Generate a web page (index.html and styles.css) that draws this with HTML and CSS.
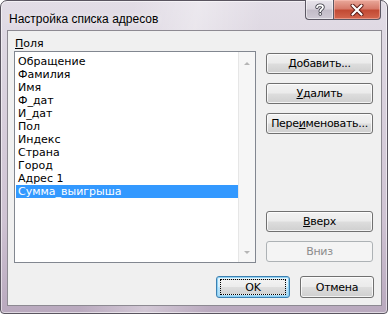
FILE: index.html
```html
<!DOCTYPE html>
<html lang="ru">
<head>
<meta charset="utf-8">
<title>Настройка списка адресов</title>
<link rel="stylesheet" href="styles.css">
</head>
<body>
<div class="window">
  <div class="titlebar">
    <div class="title">Настройка списка адресов</div>
    <div class="caption-buttons">
      <div class="cap-btn help">
        <svg width="12" height="13" viewBox="0 0 12 13"><path d="M3 4.2 C3 1.6 9 1.6 9 4.3 C9 6.2 6.2 6.2 6.2 8.2" fill="none" stroke="#3b3b45" stroke-width="3.4" stroke-linecap="round"/><path d="M3 4.2 C3 1.6 9 1.6 9 4.3 C9 6.2 6.2 6.2 6.2 8.2" fill="none" stroke="#fff" stroke-width="1.8" stroke-linecap="round"/><circle cx="6.2" cy="11" r="1.7" fill="#3b3b45"/><circle cx="6.2" cy="11" r="0.9" fill="#fff"/></svg>
      </div>
      <div class="cap-btn close">
        <svg width="14" height="12" viewBox="0 0 14 12"><path d="M2.5 1.5 L11.5 10.5 M11.5 1.5 L2.5 10.5" stroke="#5a1a14" stroke-width="4" stroke-linecap="round"/><path d="M2.5 1.5 L11.5 10.5 M11.5 1.5 L2.5 10.5" stroke="#fff" stroke-width="2.2" stroke-linecap="round"/></svg>
      </div>
    </div>
  </div>
  <div class="client">
    <div class="main">
      <div class="left">
        <div class="label"><u>П</u>оля</div>
        <div class="listbox">
          <ul class="items">
            <li>Обращение</li>
            <li>Фамилия</li>
            <li>Имя</li>
            <li>Ф_дат</li>
            <li>И_дат</li>
            <li>Пол</li>
            <li>Индекс</li>
            <li>Страна</li>
            <li>Город</li>
            <li>Адрес 1</li>
            <li class="selected">Сумма_выигрыша</li>
          </ul>
          <div class="scrollbar">
            <span class="arrow up"></span>
            <span class="arrow down"></span>
          </div>
        </div>
      </div>
      <div class="right">
        <div class="btn-group">
          <button class="btn"><u>Д</u>обавить...</button>
          <button class="btn"><u>У</u>далить</button>
          <button class="btn">Пере<u>и</u>меновать...</button>
        </div>
        <div class="btn-group bottom">
          <button class="btn"><u>В</u>верх</button>
          <button class="btn" disabled>Вниз</button>
        </div>
      </div>
    </div>
    <div class="footer">
      <button class="btn default"><span class="focus">OK</span></button>
      <button class="btn">Отмена</button>
    </div>
  </div>
</div>
</body>
</html>
```

FILE: styles.css
```css
* { box-sizing: border-box; }
html, body { margin: 0; padding: 0; }
body {
  width: 388px;
  height: 314px;
  background: #ffffff;
  font-family: "DejaVu Sans", Tahoma, sans-serif;
  font-size: 11px;
  color: #000;
}
.window {
  width: 388px;
  height: 314px;
  border: 1px solid #5a5560;
  border-radius: 7px 7px 4px 4px;
  background:
    linear-gradient(100deg, rgba(255,255,255,0) 30%, rgba(255,255,255,0.35) 45%, rgba(255,255,255,0) 60%),
    linear-gradient(180deg, #e2dde6 0%, #d9d1dd 30%, #cfc3d3 70%, #b9a9be 100%);
  display: flex;
  flex-direction: column;
  box-shadow: inset 0 0 0 1px rgba(255,255,255,0.55);
}
.titlebar {
  height: 29px;
  display: flex;
  align-items: flex-start;
  padding-left: 8px;
  flex: none;
}
.title {
  font-family: "Liberation Sans", Arial, sans-serif;
  font-size: 12px;
  line-height: 16px;
  margin-top: 10px;
  color: #000;
  text-shadow: 0 0 6px rgba(255,255,255,0.9);
}
.caption-buttons {
  margin-left: auto;
  margin-right: 6px;
  margin-top: -1px;
  display: flex;
  height: 20px;
}
.cap-btn {
  height: 20px;
  display: flex;
  align-items: center;
  justify-content: center;
  border: 1px solid #5c5864;
  border-top: none;
}
.cap-btn.help {
  width: 28px;
  border-radius: 0 0 0 4px;
  border-right: none;
  background: linear-gradient(180deg, #e7e3ea 0%, #d9d4dd 45%, #c3bcc8 55%, #cfc9d4 100%);
  box-shadow: inset 0 0 0 1px rgba(255,255,255,0.5);
}
.cap-btn.close {
  width: 48px;
  border-radius: 0 0 4px 0;
  background: linear-gradient(180deg, #e9a99b 0%, #d77b6b 45%, #c24a34 55%, #d3664e 100%);
  box-shadow: inset 0 0 0 1px rgba(255,200,190,0.5);
}
.client {
  flex: 1;
  margin: 0 5px 7px 6px;
  background: #f0f0f0;
  border: 1px solid #8d8a92;
  padding: 6px 7px 7px 6px;
  display: flex;
  flex-direction: column;
}
.main {
  display: flex;
  gap: 10px;
  height: 226px;
}
.left {
  width: 242px;
  display: flex;
  flex-direction: column;
}
.label {
  height: 14px;
  line-height: 13px;
  padding-left: 1px;
}
.label u, .btn u { text-decoration: underline; text-underline-offset: 1px; }
.listbox {
  flex: 1;
  border: 1px solid #828790;
  background: #fff;
  display: flex;
}
.items {
  list-style: none;
  margin: 0;
  padding: 3px 0 0 1px;
  flex: 1;
}
.items li {
  height: 13px;
  line-height: 13px;
  padding-left: 2px;
  white-space: nowrap;
}
.items li.selected {
  background: #3399ff;
  color: #fff;
}
.scrollbar {
  width: 17px;
  background: #f6f6f6;
  border-left: 1px solid #e6e6e6;
  display: flex;
  flex-direction: column;
  justify-content: space-between;
  align-items: center;
  padding: 10px 0 8px;
}
.arrow {
  width: 0;
  height: 0;
  border-left: 3px solid transparent;
  border-right: 3px solid transparent;
}
.arrow.up { border-bottom: 3px solid #b5b5b5; }
.arrow.down { border-top: 3px solid #b5b5b5; }
.right {
  width: 107px;
  display: flex;
  flex-direction: column;
  padding-top: 16px;
  padding-bottom: 1px;
}
.btn-group {
  display: flex;
  flex-direction: column;
  gap: 9px;
}
.btn-group.bottom { margin-top: auto; }
.btn {
  font-family: "DejaVu Sans", Tahoma, sans-serif;
  font-size: 11px;
  letter-spacing: -0.3px;
  color: #000;
  height: 21px;
  width: 107px;
  padding: 0;
  border: 1px solid #707070;
  border-radius: 3px;
  background: linear-gradient(180deg, #f2f2f2 0%, #ebebeb 48%, #dddddd 52%, #cfcfcf 100%);
  box-shadow: inset 0 0 0 1px rgba(255,255,255,0.75);
  display: flex;
  align-items: center;
  justify-content: center;
}
.btn:disabled {
  color: #8c8c8c;
  border-color: #adb2b5;
  background: #f4f4f4;
  box-shadow: none;
}
.footer {
  margin-top: auto;
  display: flex;
  justify-content: flex-end;
  gap: 10px;
}
.footer .btn {
  width: 74px;
  height: 22px;
}
.btn.default {
  border-color: #3c7fb1;
  background: linear-gradient(180deg, #eaf6fd 0%, #d9f0fc 48%, #bee6fd 52%, #a7d9f5 100%);
  box-shadow: inset 0 0 0 1px #8ed1f2;
}
.focus {
  display: flex;
  align-items: center;
  justify-content: center;
  width: 66px;
  height: 16px;
  border: 1px dotted #000;
  background: linear-gradient(180deg, #f3f3f3 0%, #ececec 48%, #dedede 52%, #d3d3d3 100%);
}
```
